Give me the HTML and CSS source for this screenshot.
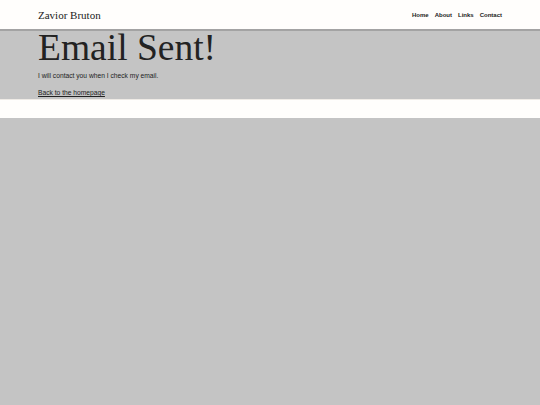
FILE: index.html
```html
<!DOCTYPE html>
<html>
<head>
<meta charset="utf-8">
<link rel="stylesheet" href="styles.css">
</head>
<body>
<header class="site-header">
  <div class="container header-inner">
    <a class="brand" href="#">Zavior Bruton</a>
    <nav class="nav">
      <a href="#">Home</a>
      <a href="#">About</a>
      <a href="#">Links</a>
      <a href="#">Contact</a>
    </nav>
  </div>
</header>
<main class="main">
  <div class="container">
    <h1 class="title">Email Sent!</h1>
    <p class="lead">I will contact you when I check my email.</p>
    <a class="back" href="#">Back to the homepage</a>
  </div>
</main>
<footer class="site-footer"></footer>
</body>
</html>
```
FILE: styles.css
```css
html, body {
  margin: 0;
  padding: 0;
}
body {
  background: #c4c4c4;
  font-family: "Liberation Sans", Arial, sans-serif;
  color: #222;
}
.container {
  width: 464px;
  margin: 0 auto;
}
.site-header {
  background: #fffefc;
  height: 29px;
  border-bottom: 2px solid #a3a3a3;
}
.header-inner {
  display: flex;
  justify-content: space-between;
  align-items: center;
  height: 29px;
}
.brand {
  font-family: "Liberation Serif", Georgia, serif;
  font-size: 11px;
  color: #222;
  text-decoration: none;
  padding-top: 1px;
}
.nav {
  display: flex;
  gap: 6px;
}
.nav a {
  font-size: 6px;
  font-weight: bold;
  color: #222;
  text-decoration: none;
}
.title {
  margin: 0;
  font-family: "Liberation Serif", Georgia, serif;
  font-weight: normal;
  font-size: 37.5px;
  line-height: 34px;
  color: #222;
}
.lead {
  margin: 7px 0 0 0;
  font-size: 6.7px;
  line-height: 8px;
}
.back {
  display: inline-block;
  margin-top: 9px;
  font-size: 6.7px;
  line-height: 8px;
  color: #222;
  text-decoration: underline;
}
.site-footer {
  background: #fffefc;
  border-top: 1px solid #efebe6;
  height: 18px;
}
```
